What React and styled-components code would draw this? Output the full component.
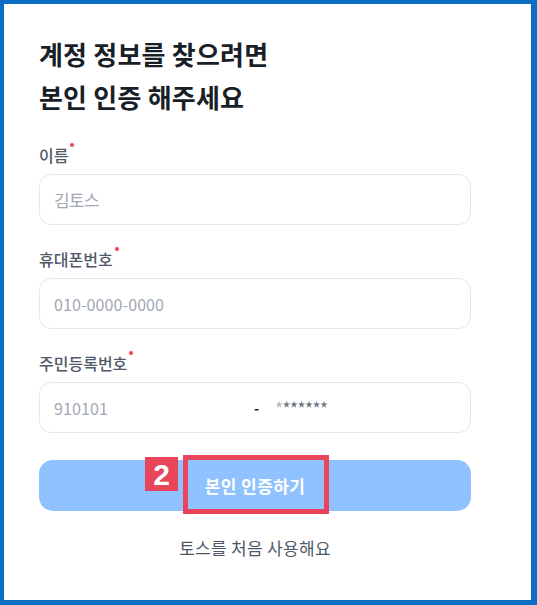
import React from 'react';
import styled, { createGlobalStyle } from 'styled-components';

const GlobalStyle = createGlobalStyle`
  html, body {
    margin: 0;
    padding: 0;
    background: #ffffff;
  }
  * {
    box-sizing: border-box;
  }
  body {
    font-family: "Noto Sans CJK KR", "Noto Sans", sans-serif;
    color: #191f28;
  }
`;

const Frame = styled.div`
  width: 537px;
  height: 605px;
  border-style: solid;
  border-color: #0b6fc1;
  border-width: 4px 6px 5px 4px;
  background: #fff;
  overflow: hidden;
`;

const Content = styled.div`
  padding: 28px 60px 0 35px;
  display: flex;
  flex-direction: column;
`;

const Title = styled.h1`
  margin: 0 0 26px;
  font-size: 26px;
  line-height: 43px;
  font-weight: 700;
  color: #191f28;
  letter-spacing: 0.2px;
`;

const Form = styled.div`
  display: flex;
  flex-direction: column;
  gap: 23px;
`;

const Field = styled.div`
  display: flex;
  flex-direction: column;
`;

const Label = styled.label`
  position: relative;
  align-self: flex-start;
  font-size: 16px;
  line-height: 22px;
  font-weight: 500;
  color: #4e5968;
  margin-bottom: 8px;

  &::after {
    content: '';
    position: absolute;
    top: -1px;
    right: -6px;
    width: 4px;
    height: 4px;
    border-radius: 50%;
    background: #f04452;
  }
`;

const InputBox = styled.div`
  height: 51px;
  border: 1px solid #e5e8eb;
  border-radius: 12px;
  display: flex;
  align-items: center;
  padding: 0 14px;
  font-size: ${(p) => (p.$hangul ? '17px' : '16px')};
  color: #a1a9b3;
  letter-spacing: ${(p) => (p.$hangul ? '-0.6px' : '0.1px')};
`;

const FrontPart = styled.span`
  width: 200px;
`;

const Dash = styled.span`
  color: #191f28;
  font-weight: 700;
  font-size: 14px;
  margin-right: 16px;
`;

const Stars = styled.span`
  font-size: 7.5px;
  letter-spacing: 0;
  color: #6b7684;
  align-self: center;
  margin-top: -8px;

  & > span:first-child {
    color: #b0b8c1;
  }
`;

const SubmitWrap = styled.div`
  position: relative;
  margin-top: 27px;
`;

const SubmitButton = styled.button`
  width: 100%;
  height: 51px;
  border: 0;
  border-radius: 14px;
  background: #90c2ff;
  color: #fff;
  font-family: inherit;
  font-size: 17px;
  font-weight: 700;
  letter-spacing: 0.4px;
`;

const Highlight = styled.div`
  position: absolute;
  left: 144px;
  top: -5px;
  width: 146px;
  height: 59px;
  border: 5px solid #e8445a;
  pointer-events: none;
`;

const Badge = styled.div`
  position: absolute;
  left: 106px;
  top: -3px;
  width: 33px;
  height: 34px;
  background: #e8445a;
  color: #fff;
  font-family: "Liberation Sans", Arial, sans-serif;
  font-size: 30px;
  font-weight: 700;
  line-height: 35px;
  text-align: center;
`;

const Footer = styled.div`
  margin-top: 25px;
  text-align: center;
  font-size: 17px;
  line-height: 24px;
  color: #4e5968;
  letter-spacing: 0.3px;
`;

const fields = [
  { label: '이름', placeholder: '김토스', hangul: true },
  { label: '휴대폰번호', placeholder: '010-0000-0000' },
];

export default function App() {
  return (
    <>
      <GlobalStyle />
      <Frame>
        <Content>
          <Title>
            계정 정보를 찾으려면
            <br />
            본인 인증 해주세요
          </Title>
          <Form>
            {fields.map((f) => (
              <Field key={f.label}>
                <Label>{f.label}</Label>
                <InputBox $hangul={f.hangul}>{f.placeholder}</InputBox>
              </Field>
            ))}
            <Field>
              <Label>주민등록번호</Label>
              <InputBox>
                <FrontPart>910101</FrontPart>
                <Dash>-</Dash>
                <Stars>
                  {Array.from({ length: 7 }).map((_, i) => (
                    <span key={i}>★</span>
                  ))}
                </Stars>
              </InputBox>
            </Field>
          </Form>
          <SubmitWrap>
            <SubmitButton>본인 인증하기</SubmitButton>
            <Highlight />
            <Badge>2</Badge>
          </SubmitWrap>
          <Footer>토스를 처음 사용해요</Footer>
        </Content>
      </Frame>
    </>
  );
}
